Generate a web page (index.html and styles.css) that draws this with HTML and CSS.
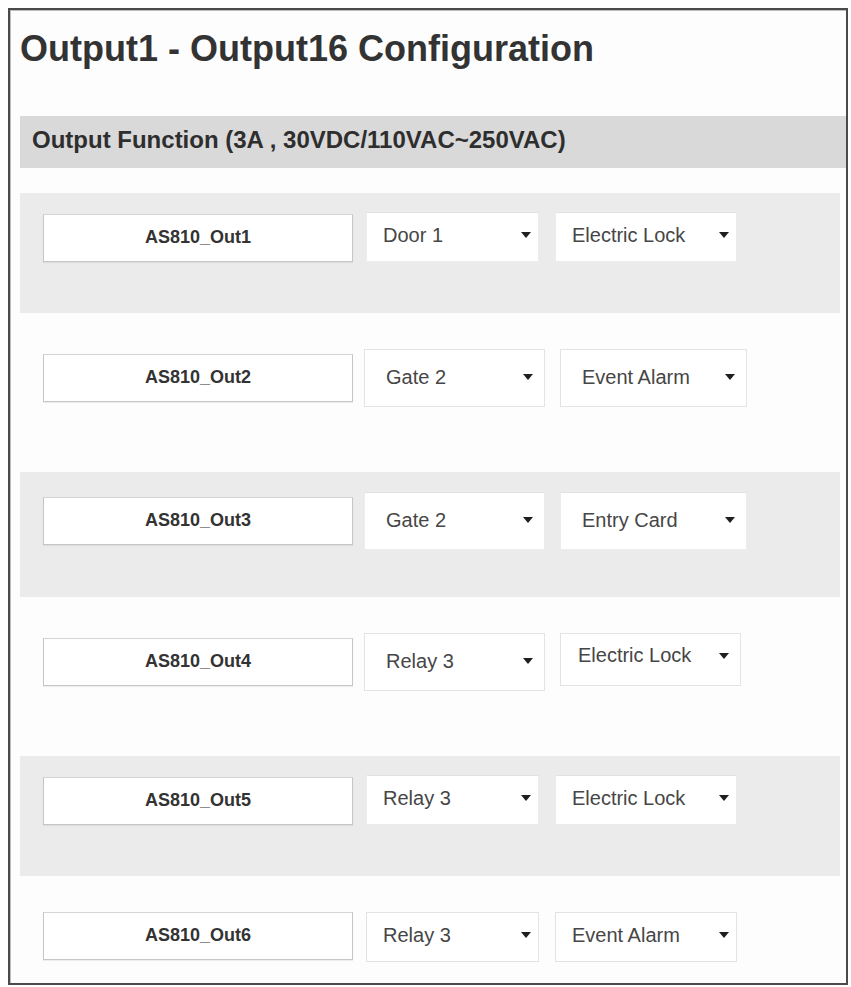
FILE: index.html
```html
<!DOCTYPE html>
<html lang="en">
<head>
<meta charset="utf-8">
<title>Output1 - Output16 Configuration</title>
<link rel="stylesheet" href="styles.css">
</head>
<body>
<div class="frame">
  <h1 class="title">Output1 - Output16 Configuration</h1>
  <div class="section-bar">Output Function (3A , 30VDC/110VAC~250VAC)</div>

  <div class="row row--shaded">
    <div class="name-field">AS810_Out1</div>
    <div class="dropdown dropdown--target"><span>Door 1</span><svg class="caret" viewBox="0 0 10 6"><polygon points="0,0 10,0 5,6"/></svg></div>
    <div class="dropdown dropdown--mode"><span>Electric Lock</span><svg class="caret" viewBox="0 0 10 6"><polygon points="0,0 10,0 5,6"/></svg></div>
  </div>

  <div class="row row--plain row--wide">
    <div class="name-field">AS810_Out2</div>
    <div class="dropdown dropdown--target"><span>Gate 2</span><svg class="caret" viewBox="0 0 10 6"><polygon points="0,0 10,0 5,6"/></svg></div>
    <div class="dropdown dropdown--mode"><span>Event Alarm</span><svg class="caret" viewBox="0 0 10 6"><polygon points="0,0 10,0 5,6"/></svg></div>
  </div>

  <div class="row row--shaded row--wide">
    <div class="name-field">AS810_Out3</div>
    <div class="dropdown dropdown--target"><span>Gate 2</span><svg class="caret" viewBox="0 0 10 6"><polygon points="0,0 10,0 5,6"/></svg></div>
    <div class="dropdown dropdown--mode"><span>Entry Card</span><svg class="caret" viewBox="0 0 10 6"><polygon points="0,0 10,0 5,6"/></svg></div>
  </div>

  <div class="row row--plain row--wide">
    <div class="name-field">AS810_Out4</div>
    <div class="dropdown dropdown--target"><span>Relay 3</span><svg class="caret" viewBox="0 0 10 6"><polygon points="0,0 10,0 5,6"/></svg></div>
    <div class="dropdown dropdown--mode dropdown--raised"><span>Electric Lock</span><svg class="caret" viewBox="0 0 10 6"><polygon points="0,0 10,0 5,6"/></svg></div>
  </div>

  <div class="row row--shaded">
    <div class="name-field">AS810_Out5</div>
    <div class="dropdown dropdown--target"><span>Relay 3</span><svg class="caret" viewBox="0 0 10 6"><polygon points="0,0 10,0 5,6"/></svg></div>
    <div class="dropdown dropdown--mode"><span>Electric Lock</span><svg class="caret" viewBox="0 0 10 6"><polygon points="0,0 10,0 5,6"/></svg></div>
  </div>

  <div class="row row--plain">
    <div class="name-field">AS810_Out6</div>
    <div class="dropdown dropdown--target"><span>Relay 3</span><svg class="caret" viewBox="0 0 10 6"><polygon points="0,0 10,0 5,6"/></svg></div>
    <div class="dropdown dropdown--mode"><span>Event Alarm</span><svg class="caret" viewBox="0 0 10 6"><polygon points="0,0 10,0 5,6"/></svg></div>
  </div>
</div>
</body>
</html>
```
FILE: styles.css
```css
html, body {
  margin: 0;
  padding: 0;
  background: #ffffff;
}

body {
  font-family: "Liberation Sans", Arial, sans-serif;
  color: #333333;
}

/* outer panel */
.frame {
  margin: 8px 0 0 8px;
  width: 840px;
  height: 977px;
  box-sizing: border-box;
  border: 2px solid #4a4a4a;
  box-shadow: inset 1px 1px 0 #bdbdbd;
  background: #fdfdfd;
  overflow: hidden;
}

.title {
  margin: 19px 0 0 10px;
  font-size: 36px;
  line-height: 40px;
  font-weight: bold;
  color: #333333;
}

.section-bar {
  margin: 47px 0 0 10px;
  height: 52px;
  box-sizing: border-box;
  padding: 0 0 4px 12px;
  background: #d9d9d9;
  font-size: 24px;
  line-height: 48px;
  font-weight: bold;
  color: #2e2e2e;
}

/* one output per row */
.row {
  display: flex;
  margin: 0 6px 0 10px;
  box-sizing: border-box;
}

.section-bar + .row {
  margin-top: 25px;
}

.row--shaded {
  height: 120px;
  padding-top: 19px;
  align-items: flex-start;
  background: #ebebeb;
}

.row--shaded.row--wide {
  height: 125px;
  padding-top: 20px;
}

.row--plain {
  height: 159px;
  padding-top: 36px;
  align-items: flex-start;
  background: #fdfdfd;
}

.name-field {
  margin-left: 23px;
  width: 310px;
  height: 48px;
  box-sizing: border-box;
  border: 1px solid #c6c6c6;
  border-top-color: #d4d4d4;
  box-shadow: 0 1px 1px rgba(0, 0, 0, 0.06);
  background: #ffffff;
  text-align: center;
  font-size: 18px;
  line-height: 45px;
  font-weight: bold;
  color: #333333;
}

.row--shaded .name-field {
  margin-top: 2px;
}

.row--wide .name-field {
  margin-top: 5px;
}

.dropdown {
  display: flex;
  align-items: center;
  justify-content: space-between;
  height: 50px;
  box-sizing: border-box;
  padding: 0 7px 4px 16px;
  border: 1px solid #ececec;
  border-top-color: #e2e2e2;
  background: #ffffff;
  font-size: 20px;
  color: #464646;
}

.row--plain .dropdown {
  border-color: #e3e3e3;
}

.dropdown--target {
  margin-left: 13px;
  width: 173px;
}

.dropdown--mode {
  margin-left: 16px;
  width: 182px;
}

.row--wide .dropdown {
  height: 58px;
  padding: 0 11px 2px 21px;
}

.row--wide .dropdown--target {
  margin-left: 11px;
  width: 181px;
}

.row--wide .dropdown--mode {
  margin-left: 15px;
  width: 187px;
}

.row--wide .dropdown--raised {
  height: 53px;
  width: 181px;
  padding-left: 17px;
  padding-bottom: 8px;
}

.caret {
  width: 10px;
  height: 6px;
  fill: #1f1f1f;
  flex-shrink: 0;
}
```
